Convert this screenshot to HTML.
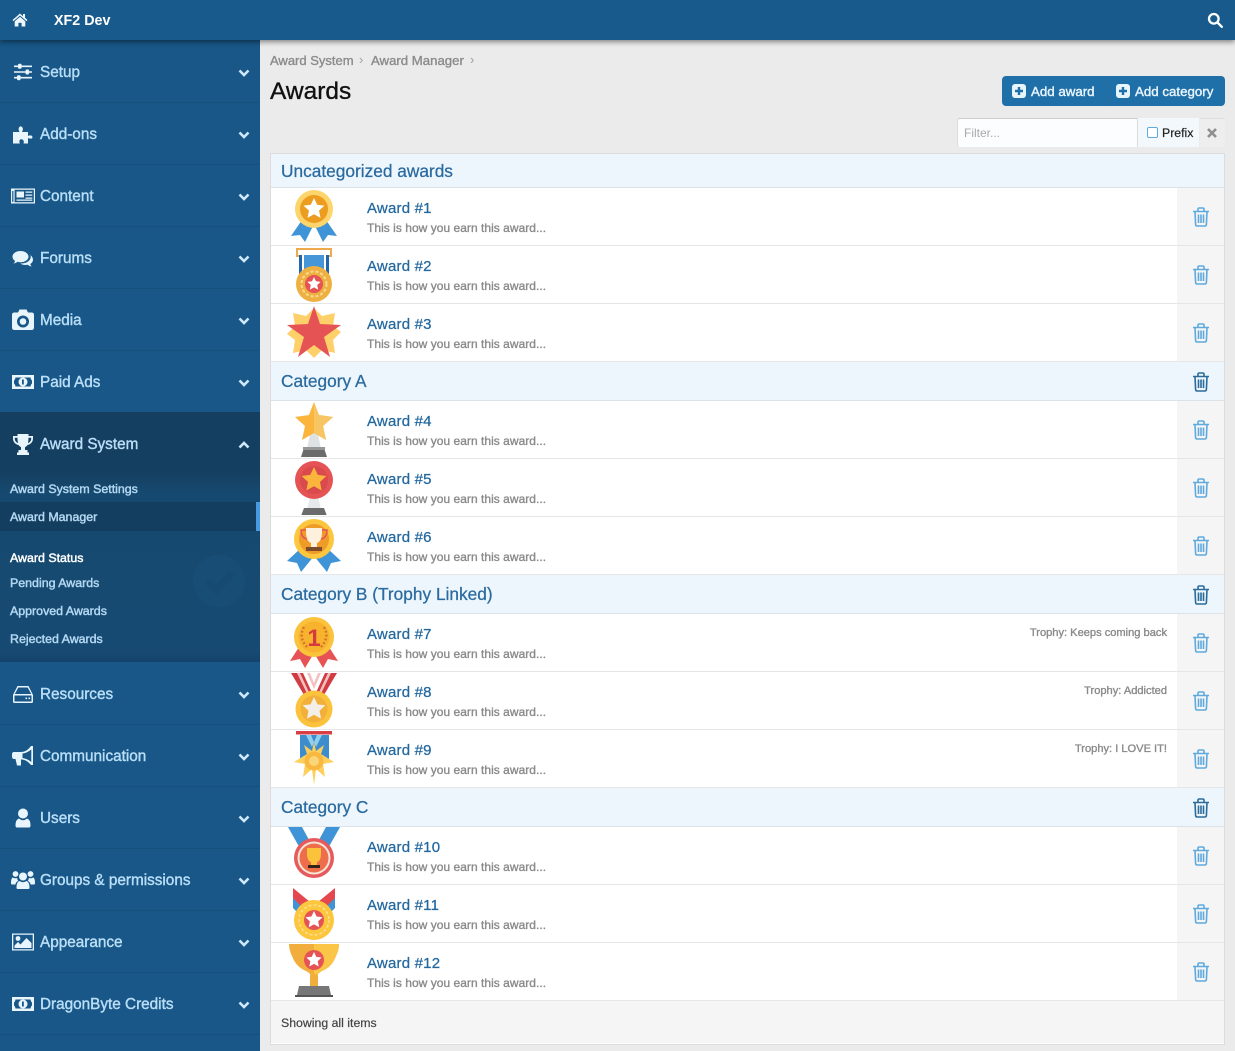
<!DOCTYPE html>
<html><head><meta charset="utf-8"><title>Awards</title>
<style>
html,body{margin:0;padding:0;width:1235px;height:1051px;overflow:hidden;background:#ebebeb;font-family:"Liberation Sans",Arial,sans-serif}
div,span,svg{position:absolute;display:block}
#hd{left:0;top:0;width:1235px;height:40px;background:#185a8c;box-shadow:0 2px 5px rgba(0,0,0,.45);z-index:5}
#sb{left:0;top:0;width:260px;height:1051px;background:#185787}
.sep{left:0;width:260px;height:1px;background:#16507d}
.nav{left:40px;height:20px;line-height:20px;margin-top:1px;font-size:15.3px;color:#b9def7;white-space:nowrap;-webkit-text-stroke:.4px #b9def7}
.sub{left:10px;height:16px;line-height:16px;font-size:12.4px;color:#b3d8f2;white-space:nowrap;-webkit-text-stroke:.45px #b3d8f2}
.ni{left:11px;width:24px;height:24px;fill:#e9f5fd}
.chev{left:237px;width:14px;height:14px;fill:none;stroke:#cfe8fa;stroke-width:2.6}
#panel{left:270px;top:153px;width:953px;height:890px;background:#fff;border:1px solid #dcdcdc}
.h{left:271px;width:953px;background:#edf6fd;border-bottom:1px solid #dbe2e8}
.ht{left:281px;height:24px;line-height:24px;font-size:17.3px;color:#2a6a9f;white-space:nowrap;-webkit-text-stroke:.25px #2a6a9f}
.r{left:271px;width:953px;height:57px;background:#fff;border-bottom:1px solid #e6e6e6}
.tc{left:1177px;width:47px;height:57px;background:#f5f5f5;border-bottom:1px solid #e6e6e6}
.t{left:367px;height:20px;line-height:20px;margin-top:1px;font-size:15px;color:#23689f;white-space:nowrap;letter-spacing:.2px;-webkit-text-stroke:.25px #23689f}
.d{left:367px;height:16px;line-height:16px;margin-top:.5px;font-size:12px;color:#8a8a8a;white-space:nowrap;-webkit-text-stroke:.35px #8a8a8a;letter-spacing:.03px}
.tr{right:68px;height:16px;line-height:16px;margin-top:1px;font-size:11.1px;color:#8a8a8a;white-space:nowrap;-webkit-text-stroke:.35px #8a8a8a}
.aw{left:286px;width:56px;height:56px}
.bin{left:1191.5px;width:18px;height:20px;fill:none;stroke:#5ea9de;stroke-width:1.6}
.bin.k{stroke:#2a6b9a}
</style></head><body>
<svg width="0" height="0" style="position:absolute">
<defs>
<symbol id="bin" viewBox="0 0 18 20"><path d="M1 4.500h16M3 4.500l.6 13q.1 1.500 1.600 1.500h7.600q1.500 0 1.600-1.500l.6-13M6 4.500V2.200Q6 1 7.200 1h3.600Q12 1 12 2.200v2.300M6.500 7.500v8.500M9 7.500v8.500M11.500 7.500v8.500"/></symbol>
<symbol id="chev" viewBox="0 0 14 14"><path d="M2.500 4.500L7 9l4.500-4.500"/></symbol>
<symbol id="star" viewBox="-10 -10 20 20"><path d="M0-10l2.900 6.100 6.600.8-4.900 4.600 1.300 6.600L0 4.800l-5.900 3.300 1.300-6.600-4.900-4.600 6.600-.8z"/></symbol>
<symbol id="money" viewBox="0 0 24 24"><path fill-rule="evenodd" d="M1 5h22v14H1zM4.500 7.500Q4 10 3 10.500v3q1 .5 1.500 3h15q.5-2.500 1.500-3v-3q-1-.5-1.500-3zM12 7.500a4.500 4.500 0 1 1 0 9 4.500 4.500 0 0 1 0-9zM11 9.500h1.800v5H11z"/></symbol>
</defs></svg>

<div id="sb">
<div style="left:0;top:412px;width:260px;height:250px;background:linear-gradient(#153f60 0,#153f60 60px,#16496f 80px,#164a72 240px,#14426a 250px)"></div>
<div class="sep" style="top:102px"></div><div class="sep" style="top:164px"></div><div class="sep" style="top:226px"></div><div class="sep" style="top:288px"></div><div class="sep" style="top:350px"></div>
<div class="sep" style="top:724px"></div><div class="sep" style="top:786px"></div><div class="sep" style="top:848px"></div><div class="sep" style="top:910px"></div><div class="sep" style="top:972px"></div><div class="sep" style="top:1034px"></div>

<div class="nav" style="top:62px">Setup</div>
<div class="nav" style="top:124px">Add-ons</div>
<div class="nav" style="top:186px">Content</div>
<div class="nav" style="top:248px">Forums</div>
<div class="nav" style="top:310px">Media</div>
<div class="nav" style="top:372px">Paid Ads</div>
<div class="nav" style="top:434px">Award System</div>
<div class="nav" style="top:684px">Resources</div>
<div class="nav" style="top:746px">Communication</div>
<div class="nav" style="top:808px">Users</div>
<div class="nav" style="top:870px">Groups &amp; permissions</div>
<div class="nav" style="top:932px">Appearance</div>
<div class="nav" style="top:994px">DragonByte Credits</div>

<!-- icons -->
<svg class="ni" style="top:60px" viewBox="0 0 24 24"><path d="M3 5.500h18v1.600H3zM3 11.200h18v1.600H3zM3 16.900h18v1.600H3z"/><rect x="7" y="3.800" width="3.600" height="5" rx="1.200"/><rect x="14.500" y="9.500" width="3.600" height="5" rx="1.200"/><rect x="6" y="15.200" width="3.600" height="5" rx="1.200"/></svg>
<svg class="ni" style="top:122px" viewBox="0 0 24 24"><path d="M2 10h6.500Q7 7.500 8 5.500 9.500 3 11.500 5.500q1 2 -.5 4.500H17v4q2.500-1.200 4 0 1 1.500 0 2.200-1.500 1-4-.2v5.500h-4.500q1-3-1-4-2.500-.8-3 1 -.5 1.500.5 3H2z"/></svg>
<svg class="ni" style="top:184px" viewBox="0 0 24 24"><path fill-rule="evenodd" d="M0 4.500h24v15H0zM3.600 5.700v12.600h19.200V5.700zM1.200 7v11h1.200V7zM5.500 7.500h7.500v6H5.500zM14.500 7.500h6.800v1.300h-6.800zM14.500 10.500h6.800v1.300h-6.800zM14.500 13.500h6.800v1.300h-6.800zM5.500 15.500h15.800v1.300H5.500z"/></svg>
<svg class="ni" style="top:246px" viewBox="0 0 24 24"><path d="M9.500 5C5 5 1.500 7.500 1.500 10.700c0 1.700 1 3.200 2.600 4.300-.3 1-.9 1.800-1.600 2.500 1.500-.2 3-.9 4-1.700 1 .3 2 .4 3 .4 4.500 0 8-2.500 8-5.500S14 5 9.500 5z"/><path d="M19.200 8.500c.4.700.5 1.400.5 2.200 0 4-4.200 6.800-9.700 6.800h-.8c1.400 1 3.200 1.500 5.300 1.500.8 0 1.500-.1 2.200-.2 1 .9 2.500 1.500 4 1.700-.6-.7-1.200-1.500-1.400-2.500 1.700-1 2.700-2.500 2.700-4.200 0-2.200-1.400-4-3.300-5.300z"/></svg>
<svg class="ni" style="top:308px" viewBox="0 0 24 24"><path fill-rule="evenodd" d="M3.500 4.500H7L8.500 1.500h7L17 4.500h3.500Q23 4.500 23 7v12.500q0 2.500-2.500 2.500h-17Q1 22 1 19.500V7q0-2.500 2.500-2.500zM12 7.500a6 6 0 1 0 0 12 6 6 0 0 0 0-12zM12 10.200a3.300 3.300 0 1 1 0 6.600 3.300 3.300 0 0 1 0-6.600z"/></svg>
<svg class="ni" style="top:370px"><use href="#money"/></svg>
<svg class="ni" style="top:432px" viewBox="0 0 24 24"><path fill-rule="evenodd" d="M6.500 2h11v2H22v2.500c0 3.500-2.500 6-5.500 6.500-.7 1-1.500 1.700-2.500 2.200V18h2.500v2.500H18V23H6v-2.500h1.500V18H10v-2.800c-1-.5-1.800-1.200-2.500-2.200C4.500 12.500 2 10 2 6.500V4h4.500zM3.800 5.800v.8c0 2 1.200 3.800 3.300 4.500-.4-1.300-.6-3-.6-5.300zM20.200 5.800h-2.700c0 2.300-.2 4-.6 5.300 2.100-.7 3.300-2.500 3.300-4.500z"/></svg>
<svg class="ni" style="top:682px" viewBox="0 0 24 24"><path fill-rule="evenodd" d="M6.500 4h11L22 13v6.500q0 1.500-1.500 1.500h-17Q2 21 2 19.500V13zM7.300 5.500L3.800 12h16.400l-3.500-6.500zM3.500 13.500v6h17v-6zM14.500 15.500h1.600v1.600h-1.600zM17.500 15.500h1.600v1.600h-1.600z"/></svg>
<svg class="ni" style="top:744px" viewBox="0 0 24 24"><path fill-rule="evenodd" d="M22 2v19h-2C17 17.500 14 15.500 10 15.500v6H6l-1.500-6.500H3Q1 15 1 12.500v-2Q1 8 3 8h7c4 0 7-2 10-6zM20.300 5.500Q16 9 11.500 9.500v4.500q4.500.5 8.800 4z"/></svg>
<svg class="ni" style="top:806px" viewBox="0 0 24 24"><circle cx="12" cy="7.500" r="5"/><path d="M6 21.500q-1.500 0-1.500-2 0-6 3.500-7 2 1.800 4 1.800t4-1.800q3.500 1 3.500 7 0 2-1.500 2z"/></svg>
<svg class="ni" style="top:868px" viewBox="0 0 24 24"><circle cx="12" cy="8.500" r="4"/><circle cx="4.500" cy="6" r="2.900"/><circle cx="19.500" cy="6" r="2.900"/><path d="M6.500 21q-1 0-1-1.500 0-5.500 3-6.500 1.500 1.200 3.500 1.200t3.500-1.200q3 1 3 6.500 0 1.500-1 1.500z"/><path d="M0 15q0-5 1.800-5.500 1 .8 2.700.8 1 0 1.700-.3 0 1.500 1 3-2.200.8-2.800 3.500H1q-1 0-1-1.500zM24 15q0-5-1.800-5.500-1 .8-2.700.8-1 0-1.700-.3 0 1.500-1 3 2.200.8 2.800 3.500H23q1 0 1-1.500z"/></svg>
<svg class="ni" style="top:930px" viewBox="0 0 24 24"><path fill-rule="evenodd" d="M1 3.500h22v17H1zM2.300 4.800v14.400h19.400V4.800z"/><circle cx="7" cy="8.500" r="2.400"/><path d="M3.500 18v-2.500l3.500-3.500 2.500 2.500 6-6.500 5 5V18z"/></svg>
<svg class="ni" style="top:992px"><use href="#money"/></svg>

<svg class="chev" style="top:66px;stroke:#cfe8fa"><use href="#chev"/></svg>
<svg class="chev" style="top:128px"><use href="#chev"/></svg>
<svg class="chev" style="top:190px"><use href="#chev"/></svg>
<svg class="chev" style="top:252px"><use href="#chev"/></svg>
<svg class="chev" style="top:314px"><use href="#chev"/></svg>
<svg class="chev" style="top:376px"><use href="#chev"/></svg>
<svg class="chev" style="top:438px;transform:rotate(180deg)"><use href="#chev"/></svg>
<svg class="chev" style="top:688px"><use href="#chev"/></svg>
<svg class="chev" style="top:750px"><use href="#chev"/></svg>
<svg class="chev" style="top:812px"><use href="#chev"/></svg>
<svg class="chev" style="top:874px"><use href="#chev"/></svg>
<svg class="chev" style="top:936px"><use href="#chev"/></svg>
<svg class="chev" style="top:998px"><use href="#chev"/></svg>

<div style="left:0;top:502px;width:260px;height:29px;background:#143e5f"></div>
<div style="left:256px;top:502px;width:4px;height:29px;background:#479ade"></div>
<svg style="left:192px;top:554px;width:54px;height:54px" viewBox="0 0 54 54"><circle cx="27" cy="27" r="26" fill="#184e76"/><path d="M15 27l9 9 16-17" fill="none" stroke="#164a72" stroke-width="7"/></svg>
<div class="sub" style="top:481px">Award System Settings</div>
<div class="sub" style="top:509px">Award Manager</div>
<div class="sub" style="top:550px;color:#fff;-webkit-text-stroke:.45px #fff">Award Status</div>
<div class="sub" style="top:575px">Pending Awards</div>
<div class="sub" style="top:603px">Approved Awards</div>
<div class="sub" style="top:631px">Rejected Awards</div>
</div>

<div id="hd">
<svg style="left:12px;top:12px;width:16px;height:16px;fill:#f0f7fc" viewBox="0 0 16 16"><path d="M8 1.500L.5 8l1 1.100L8 3.500l6.500 5.600 1-1.100-2.500-2.200V2h-2v2.200z"/><path d="M8 4.800l5.300 4.600V14.500H9.600v-3.600H6.400v3.600H2.700V9.400z"/></svg>
<div style="left:54px;top:11px;height:20px;line-height:20px;font-size:14.3px;font-weight:bold;color:#fff;white-space:nowrap">XF2 Dev</div>
<svg style="left:1207px;top:12px;width:16px;height:16px;fill:none;stroke:#fff;stroke-width:2.300" viewBox="0 0 16 16"><circle cx="6.800" cy="6.800" r="4.800"/><path d="M10.500 10.500l4.300 4.300" stroke-linecap="round"/></svg>
</div>

<div style="left:270px;top:53px;height:16px;line-height:16px;font-size:13px;color:#8b8b8b;white-space:nowrap;-webkit-text-stroke:.35px #8b8b8b">Award System</div>
<div style="left:359px;top:52px;height:16px;line-height:16px;font-size:13px;color:#a0a0a0">›</div>
<div style="left:371px;top:53px;height:16px;line-height:16px;font-size:13.2px;color:#8b8b8b;white-space:nowrap;-webkit-text-stroke:.35px #8b8b8b">Award Manager</div>
<div style="left:470px;top:52px;height:16px;line-height:16px;font-size:13px;color:#a0a0a0">›</div>
<div style="left:270px;top:77px;height:30px;line-height:30px;font-size:24.5px;color:#111;white-space:nowrap;-webkit-text-stroke:.35px #111">Awards</div>

<div style="left:1002px;top:76px;width:223px;height:30px;background:#1f70a9;border-radius:4px"></div>
<div style="left:1106px;top:76px;width:1px;height:30px;background:#2a6a9b"></div>
<svg style="left:1012px;top:84px;width:14px;height:14px" viewBox="0 0 14 14"><rect width="14" height="14" rx="3" fill="#e8f4fc"/><path d="M7 3v8M3 7h8" stroke="#1f70a9" stroke-width="2.400"/></svg>
<svg style="left:1116px;top:84px;width:14px;height:14px" viewBox="0 0 14 14"><rect width="14" height="14" rx="3" fill="#e8f4fc"/><path d="M7 3v8M3 7h8" stroke="#1f70a9" stroke-width="2.400"/></svg>
<div style="left:1031px;top:83px;height:18px;line-height:18px;font-size:13.3px;color:#e8f4fc;white-space:nowrap;-webkit-text-stroke:.4px #e8f4fc">Add award</div>
<div style="left:1135px;top:83px;height:18px;line-height:18px;font-size:13.3px;color:#e8f4fc;white-space:nowrap;-webkit-text-stroke:.4px #e8f4fc">Add category</div>

<div style="left:957px;top:118px;width:180px;height:28px;background:#fbfdff;border-top:1px solid #ccc;border-left:1px solid #ddd;border-radius:3px 0 0 3px"></div>
<div style="left:964px;top:125px;height:16px;line-height:16px;font-size:12px;color:#a9a9a9">Filter...</div>
<div style="left:1137px;top:118px;width:62px;height:29px;background:#f3f8fc;border-left:1px solid #ddd;box-sizing:border-box"></div>
<div style="left:1147px;top:127px;width:9px;height:9px;border:1px solid #5ea9de;border-radius:2px;background:#fff"></div>
<div style="left:1162px;top:125px;height:16px;line-height:16px;font-size:12.3px;color:#222;-webkit-text-stroke:.2px #222">Prefix</div>
<div style="left:1200px;top:118px;width:25px;height:29px;background:#eeeeee;border-top:1px solid #ddd;box-sizing:border-box"></div>
<svg style="left:1207px;top:128px;width:10px;height:10px" viewBox="0 0 10 10"><path d="M1 1l8 8M9 1l-8 8" stroke="#8e8e8e" stroke-width="2.600"/></svg>

<div id="panel"></div>

<div class="h" style="top:154px;height:33px"></div><div class="ht" style="top:159px">Uncategorized awards</div>
<div class="h" style="top:362px;height:38px"></div><div class="ht" style="top:369px">Category A</div>
<div class="h" style="top:575px;height:38px"></div><div class="ht" style="top:582px">Category B (Trophy Linked)</div>
<div class="h" style="top:788px;height:38px"></div><div class="ht" style="top:795px">Category C</div>
<svg class="bin k" style="top:372px"><use href="#bin"/></svg>
<svg class="bin k" style="top:585px"><use href="#bin"/></svg>
<svg class="bin k" style="top:798px"><use href="#bin"/></svg>

<div class="r" style="top:188px"></div><div class="tc" style="top:188px"></div><div class="t" style="top:198px">Award #1</div><div class="d" style="top:219px">This is how you earn this award...</div><svg class="bin" style="top:207px"><use href="#bin"/></svg>
<div class="r" style="top:246px"></div><div class="tc" style="top:246px"></div><div class="t" style="top:256px">Award #2</div><div class="d" style="top:277px">This is how you earn this award...</div><svg class="bin" style="top:265px"><use href="#bin"/></svg>
<div class="r" style="top:304px"></div><div class="tc" style="top:304px"></div><div class="t" style="top:314px">Award #3</div><div class="d" style="top:335px">This is how you earn this award...</div><svg class="bin" style="top:323px"><use href="#bin"/></svg>
<div class="r" style="top:401px"></div><div class="tc" style="top:401px"></div><div class="t" style="top:411px">Award #4</div><div class="d" style="top:432px">This is how you earn this award...</div><svg class="bin" style="top:420px"><use href="#bin"/></svg>
<div class="r" style="top:459px"></div><div class="tc" style="top:459px"></div><div class="t" style="top:469px">Award #5</div><div class="d" style="top:490px">This is how you earn this award...</div><svg class="bin" style="top:478px"><use href="#bin"/></svg>
<div class="r" style="top:517px"></div><div class="tc" style="top:517px"></div><div class="t" style="top:527px">Award #6</div><div class="d" style="top:548px">This is how you earn this award...</div><svg class="bin" style="top:536px"><use href="#bin"/></svg>
<div class="r" style="top:614px"></div><div class="tc" style="top:614px"></div><div class="t" style="top:624px">Award #7</div><div class="d" style="top:645px">This is how you earn this award...</div><svg class="bin" style="top:633px"><use href="#bin"/></svg><div class="tr" style="top:624px">Trophy: Keeps coming back</div>
<div class="r" style="top:672px"></div><div class="tc" style="top:672px"></div><div class="t" style="top:682px">Award #8</div><div class="d" style="top:703px">This is how you earn this award...</div><svg class="bin" style="top:691px"><use href="#bin"/></svg><div class="tr" style="top:682px">Trophy: Addicted</div>
<div class="r" style="top:730px"></div><div class="tc" style="top:730px"></div><div class="t" style="top:740px">Award #9</div><div class="d" style="top:761px">This is how you earn this award...</div><svg class="bin" style="top:749px"><use href="#bin"/></svg><div class="tr" style="top:740px">Trophy: I LOVE IT!</div>
<div class="r" style="top:827px"></div><div class="tc" style="top:827px"></div><div class="t" style="top:837px">Award #10</div><div class="d" style="top:858px">This is how you earn this award...</div><svg class="bin" style="top:846px"><use href="#bin"/></svg>
<div class="r" style="top:885px"></div><div class="tc" style="top:885px"></div><div class="t" style="top:895px">Award #11</div><div class="d" style="top:916px">This is how you earn this award...</div><svg class="bin" style="top:904px"><use href="#bin"/></svg>
<div class="r" style="top:943px"></div><div class="tc" style="top:943px"></div><div class="t" style="top:953px">Award #12</div><div class="d" style="top:974px">This is how you earn this award...</div><svg class="bin" style="top:962px"><use href="#bin"/></svg>

<!-- award images: 56 box, centre x=28 => page x 314 -->
<svg class="aw" style="top:188px" viewBox="0 0 56 56"><path d="M16 32L5 48l9-1 5 7 9-18 9 18 5-7 9 1-11-16z" fill="#3e94d6"/><circle cx="28" cy="21" r="19" fill="#fdd56c"/><circle cx="28" cy="21" r="14" fill="#ec9d1f"/><use href="#star" x="17" y="10" width="22" height="22" fill="#fff"/></svg>
<svg class="aw" style="top:246px" viewBox="0 0 56 56"><path d="M11 3h34v7H11z" fill="none" stroke="#eea94a" stroke-width="2"/><rect x="13" y="9" width="30" height="22" fill="#1f66ae"/><rect x="16" y="9" width="24" height="22" fill="#fff"/><rect x="18" y="9" width="20" height="22" fill="#4496d8"/><circle cx="28" cy="38" r="18" fill="#eeb040"/><circle cx="28" cy="38" r="12.500" fill="none" stroke="#f9d990" stroke-width="2" stroke-dasharray="3 2"/><circle cx="28" cy="38" r="9" fill="#e55355"/><use href="#star" x="21" y="31" width="14" height="14" fill="#fff"/></svg>
<svg class="aw" style="top:304px" viewBox="0 0 56 56"><path d="M28 4l8 8 13-3-2 13 8 6-8 8 2 13-13-3-8 8-8-8-13 3 2-13-8-6 8-8-2-13 13 3z" fill="#fdd06a"/><path d="M28 2l6 18 21 1-17 12 6 20-16-12-16 12 6-20L1 21l21-1z" fill="#e55354"/></svg>
<svg class="aw" style="top:401px" viewBox="0 0 56 56"><path d="M25 28h6l4 20H21z" fill="#dfe2e4"/><path d="M18 47h20l3 9H15z" fill="#6b6b6b"/><rect x="17" y="46" width="22" height="3" fill="#969696"/><path d="M28 1l5 13 14 2-10 9 3 14-12-7-12 7 3-14-10-9 14-2z" fill="#fbb53c"/><path d="M28 1l5 13 14 2-10 9 3 14-12-7z" fill="#f7c662"/></svg>
<svg class="aw" style="top:459px" viewBox="0 0 56 56"><path d="M24 38h8l3 12H21z" fill="#e6e9eb"/><path d="M18 49h20l3 8H15z" fill="#6b6b6b"/><circle cx="28" cy="21" r="19" fill="#e55355"/><circle cx="28" cy="21" r="14" fill="#d94a4c"/><use href="#star" x="15" y="8" width="26" height="26" fill="#fbb53c"/></svg>
<svg class="aw" style="top:517px" viewBox="0 0 56 56"><path d="M14 32L1 44l10 2 4 9 13-16 13 16 4-9 10-2-13-12z" fill="#3e94d6"/><circle cx="28" cy="22" r="20" fill="#fcc63e"/><circle cx="28" cy="22" r="15" fill="#ef9b28"/><path d="M20 11h16v4q0 9-5 11v4h4v4H21v-4h4v-4q-5-2-5-11z" fill="#fdf0dc"/><rect x="20" y="30" width="16" height="4" fill="#7a4a2a"/><path d="M20 13h-5q0 8 6 9M36 13h5q0 8-6 9" fill="none" stroke="#e55354" stroke-width="1.500"/></svg>
<svg class="aw" style="top:614px" viewBox="0 0 56 56"><path d="M15 30L4 47l10-2 5 9 9-15 9 15 5-9 10 2-11-17z" fill="#e75354"/><circle cx="28" cy="23" r="20" fill="#fbc23c"/><circle cx="28" cy="23" r="15.500" fill="#f8b32e"/><path d="M18 13q-6 10 3 20M38 13q6 10-3 20" fill="none" stroke="#d5762a" stroke-width="2.500" stroke-dasharray="2 2"/><text x="28" y="32" text-anchor="middle" font-size="24" font-weight="bold" font-family="Liberation Sans" fill="#d63b3f">1</text></svg>
<svg class="aw" style="top:672px" viewBox="0 0 56 56"><path d="M5 1h12l11 24L39 1h12L32 33h-8z" fill="#d13c43"/><path d="M11 1h3l14 30 14-30h3L29 34h-2zM21 1h3l4 10 4-10h3l-7 16z" fill="#f3c1c1"/><circle cx="28" cy="37" r="18.500" fill="#fbc23c"/><circle cx="28" cy="37" r="13.500" fill="#f2b03a"/><use href="#star" x="16" y="25" width="24" height="24" fill="#f3efe6"/></svg>
<svg class="aw" style="top:730px" viewBox="0 0 56 56"><rect x="10" y="1" width="36" height="3.500" fill="#d83f44"/><path d="M14 5h29v24l-14.500 10L14 29z" fill="#3d8ccc"/><path d="M20 5h5l5 12-2 4zM36 5h-5l-5 12 2 4z" fill="#8ed0ee"/><path d="M28 12l2 9 8-6-3 9 13 8-11 2 2 13-9-8-2 16-2-16-9 8 2-13-11-2 13-8-3-9 8 6z" fill="#fdcf5c"/><circle cx="28" cy="31" r="9.500" fill="#f8b93e"/><circle cx="28" cy="31" r="5" fill="#fbd57a"/></svg>
<svg class="aw" style="top:827px" viewBox="0 0 56 56"><path d="M2 0h14l12 22L40 0h14L36 32H20z" fill="#3e94d6"/><path d="M20 0h16l-8 14z" fill="#fff"/><circle cx="28" cy="31" r="20" fill="#e65a5d"/><circle cx="28" cy="31" r="16.500" fill="#f7e6d7"/><circle cx="28" cy="31" r="14.500" fill="#ee6d4a"/><path d="M21 21h14v5q0 8-4 9v3h3v3H22v-3h3v-3q-4-1-4-9z" fill="#fbc23c"/><rect x="22" y="38" width="12" height="3" fill="#33241a"/></svg>
<svg class="aw" style="top:885px" viewBox="0 0 56 56"><path d="M7 8l15 14-6 10-9-9z" fill="#3e94d6"/><path d="M7 3l17 14-6 7L7 13z" fill="#e4484e"/><path d="M49 8L34 22l6 10 9-9z" fill="#3e94d6"/><path d="M49 3L32 17l6 7 11-11z" fill="#e4484e"/><circle cx="28" cy="35" r="20" fill="#fcc63e"/><circle cx="28" cy="35" r="15" fill="none" stroke="#fde08e" stroke-width="1.500" stroke-dasharray="3 2"/><circle cx="28" cy="35" r="10" fill="#e55355"/><use href="#star" x="19" y="26" width="18" height="18" fill="#fff"/></svg>
<svg class="aw" style="top:943px" viewBox="0 0 56 56"><path d="M3 1h50q0 6-3 12-4 11-14 15-4 2-5 5v9h-6v-9q-1-3-5-5Q10 24 6 13 3 7 3 1z" fill="#f2ae3d"/><path d="M28 1h25q0 6-3 12-4 11-14 15-4 2-5 5v9h-3z" fill="#fbc547"/><rect x="24" y="31" width="8" height="14" rx="2" fill="#f2ae3d"/><path d="M13 43h30l2 9H11z" fill="#777"/><rect x="9" y="52" width="38" height="2" fill="#555"/><circle cx="28" cy="17" r="10" fill="#e55355"/><use href="#star" x="20" y="9" width="16" height="16" fill="#fff"/></svg>

<div style="left:271px;top:1001px;width:953px;height:42px;background:#f5f5f5"></div>
<div style="left:281px;top:1015px;height:16px;line-height:16px;font-size:12.3px;color:#444;white-space:nowrap;-webkit-text-stroke:.2px #444">Showing all items</div>
</body></html>
